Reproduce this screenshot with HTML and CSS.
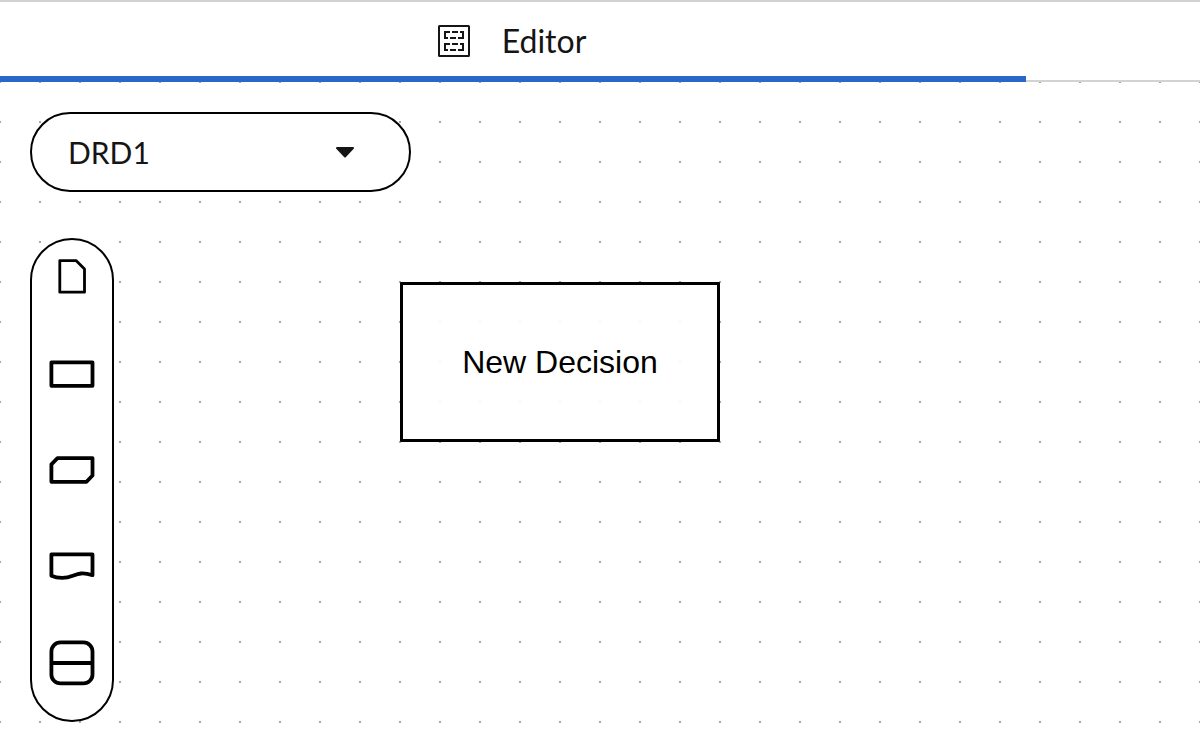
FILE: index.html
```html
<!DOCTYPE html>
<html lang="en">
<head>
<meta charset="utf-8">
<title>Editor</title>
<link rel="stylesheet" href="styles.css">
</head>
<body>
<header class="tabs">
  <button class="tab" type="button">
    <svg class="tab-icon" viewBox="0 0 32 32" aria-hidden="true">
      <rect x="1" y="1" width="30" height="30" rx="0.5"/>
      <path d="M12 7H7V13H10M14 7H20M22 7H25V13H20M12 13H18M12 19H7V25H10M14 19H20M22 19H25V25H20M12 25H18"/>
    </svg>
    <span>Editor</span>
  </button>
</header>
<main class="canvas">
  <div class="views">
    <select class="views-select" aria-label="View">
      <option>DRD1</option>
    </select>
    <svg class="views-caret" viewBox="0 0 20 12" aria-hidden="true"><path d="M2 2H18L10 10.5Z"/></svg>
  </div>
  <div class="palette">
    <button class="palette-item" type="button" aria-label="Input data">
      <svg class="thin" viewBox="0 0 48 48"><path d="M11.8 6.6H28L36.5 15V38.2H11.8Z"/></svg>
    </button>
    <button class="palette-item" type="button" aria-label="Decision">
      <svg viewBox="0 0 48 48"><path d="M3.4 12.4H44.5V35.8H3.4Z"/></svg>
    </button>
    <button class="palette-item" type="button" aria-label="Business knowledge model">
      <svg viewBox="0 0 48 48"><path d="M9.5 12.2H44.5V29.5L38.5 35.8H3.4V18.3Z"/></svg>
    </button>
    <button class="palette-item" type="button" aria-label="Knowledge source">
      <svg viewBox="0 0 48 48"><path d="M3.4 12.4H44.5V33.2C28 28 27 36 14 35.9C9 35.9 6 35 3.4 33.8Z"/></svg>
    </button>
    <button class="palette-item" type="button" aria-label="Decision service">
      <svg viewBox="0 0 48 48"><rect x="3.4" y="4.4" width="41.1" height="41" rx="9"/><path d="M3.4 25H44.5"/></svg>
    </button>
  </div>
  <div class="node">New Decision</div>
</main>
</body>
</html>
```
FILE: styles.css
```css
* {
  box-sizing: border-box;
}

body {
  margin: 0;
  min-height: 100vh;
  display: flex;
  flex-direction: column;
  font-family: Lato, "Open Sans", sans-serif;
  font-size: 32px;
  line-height: 48px;
  color: #151515;
  background: #fff;
}

button,
select {
  margin: 0;
  border: 0;
  font: inherit;
  color: inherit;
  background: none;
  cursor: pointer;
}

.tabs {
  height: 82px;
  border-top: 2px solid #d2d2d2;
  box-shadow: inset 0 -2px #d2d2d2;
}

.tab {
  display: flex;
  align-items: center;
  justify-content: center;
  gap: 32px;
  width: 85.5%;
  height: 80px;
  padding: 4px 2px 0 0;
  border-bottom: 6px solid #2b66c9;
}

.tab-icon {
  width: 32px;
  height: 32px;
  fill: none;
  stroke: #151515;
  stroke-width: 2;
}

.canvas {
  position: relative;
  flex: 1;
  display: flex;
  flex-direction: column;
  align-items: flex-start;
  gap: 46px;
  padding: 30px 30px 18px;
  background: conic-gradient(from 270deg at 2px 2px, #a6a6a6 90deg, #fff 0) -1px -1px / 40px 40px;
}

.views {
  display: grid;
  align-items: center;
  width: 381px;
}

.views-select {
  grid-area: 1 / 1;
  height: 80px;
  padding: 0 36px;
  border: 2px solid #000;
  border-radius: 40px;
  font-size: 30px;
  background: #fff;
  appearance: none;
}

.views-caret {
  grid-area: 1 / 1;
  justify-self: end;
  width: 20px;
  height: 12px;
  margin-right: 56px;
  fill: #151515;
  stroke: #151515;
  stroke-width: 2;
  stroke-linejoin: round;
  pointer-events: none;
}

.palette {
  display: flex;
  flex-direction: column;
  align-items: center;
  gap: 48px;
  width: 84px;
  padding: 14px 0 34px;
  border: 2px solid #000;
  border-radius: 42px;
  background: #fff;
}

.palette-item {
  display: flex;
  padding: 0;
}

.palette-item svg {
  width: 48px;
  height: 48px;
  fill: none;
  stroke: #000;
  stroke-width: 3.8;
  stroke-linejoin: round;
}

.palette-item .thin {
  stroke-width: 2.8;
}

.node {
  position: absolute;
  left: 400px;
  top: 200px;
  display: flex;
  align-items: center;
  justify-content: center;
  width: 320px;
  height: 160px;
  border: 3px solid #000;
  border-radius: 1px;
  font-family: "Liberation Sans", Arial, sans-serif;
  color: #000;
  background: rgba(255, 255, 255, 0.9);
}
```
